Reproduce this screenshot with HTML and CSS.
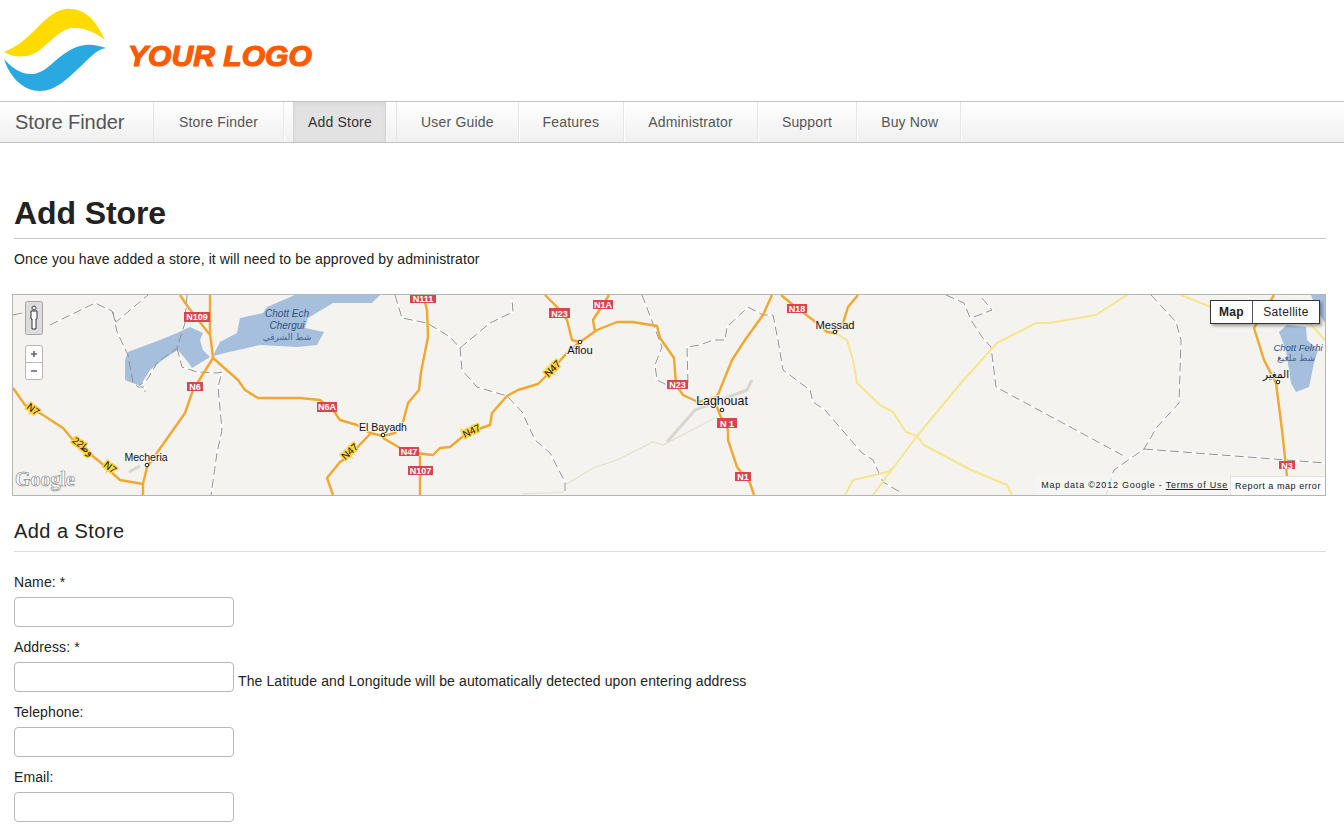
FILE: index.html
```html
<!DOCTYPE html>
<html lang="en">
<head>
<meta charset="utf-8">
<title>Add Store</title>
<link rel="stylesheet" href="styles.css">
</head>
<body>
<header class="site-head">
  <svg class="logo-mark" viewBox="0 0 110 101" width="110" height="101" aria-hidden="true">
    <path class="logo-y" d="M4 52C14 48 24 41 33 32C43 22 53 11 65 9C84 7 96 20 105 40C98 34 85 27 72 28C60 29 49 44 37 52C27 58 14 58 4 52Z"/>
    <path class="logo-b" d="M4 59C12 68 22 75 33 74C46 73 56 58 67 52C80 43 93 43 106 48C95 50 88 60 80 67C68 78 56 91 40 91C24 91 10 78 4 59Z"/>
  </svg>
  <span class="logo-text">YOUR LOGO</span>
</header>

<nav class="navbar">
  <a class="brand">Store Finder</a>
  <ul class="nav">
    <li class="nav-item nav-first">Store Finder</li>
    <li class="nav-item nav-active">Add Store</li>
    <li class="nav-item nav-after">User Guide</li>
    <li class="nav-item">Features</li>
    <li class="nav-item">Administrator</li>
    <li class="nav-item">Support</li>
    <li class="nav-item nav-last">Buy Now</li>
  </ul>
</nav>

<main class="content">
  <h1 class="page-title">Add Store</h1>
  <p class="lead">Once you have added a store, it will need to be approved by administrator</p>

  <div class="map">
    <svg class="map-canvas" viewBox="13 295 1312 200" width="1312" height="200" aria-hidden="true">
      <g class="urban">
        <path d="M752 380L747 390L695 410L667 442"/>
        <path d="M129 472L140 466"/>
      </g>
      <path class="minor" d="M717 417L663 445L653 442L617 460L593 468L565 485L565 492L522 494"/>

      <g class="border-w">
        <path d="M13 315L22 313M50 325L95 303L112 311L116 322L148 295M113 312L117 332L128 355L133 383L138 387L145 387L145 392M187 295L185 323L177 348L157 363L147 380L140 385M177 348L182 367L197 372L217 373L222 372L218 387L222 430L217 453L211 495M395 295L402 318L427 323L450 337L460 348L462 370L477 387L507 396L522 412L535 440L550 453L565 482L565 493M460 348L490 323L513 312L512 298M642 295L662 347L655 365L657 380L667 385M688 383L687 347L700 345L713 340L725 340L727 327L748 307L763 315L773 315L778 340L783 370L810 390L813 402L825 410L862 453L873 460L883 482L900 492M946 295L964 303L971 320L982 337L991 347L996 387L1124 456M982 298L992 310L974 317M1151 295L1176 322L1181 340L1179 403L1157 427L1144 449L1114 470L1106 495M1144 449L1325 463"/>
      </g>
      <g class="water">
        <path d="M295 295L267 307L263 313L240 318L237 333L220 342L216 350L213 356L225 353L260 345L297 347L317 345L324 332L305 328L308 318L333 303L372 303L380 295Z"/>
        <path d="M125 360L128 352L160 340L177 333L190 327L203 333L200 340L203 350L210 357L192 368L188 362L178 350L165 358L150 370L140 386L125 380Z"/>
        <path d="M1279 332L1287 325L1306 327L1307 340L1318 350L1314 363L1309 387L1296 392L1291 383L1286 350Z"/>
        <path d="M1311 295L1325 295L1325 323L1317 310Z"/>
        <path d="M222 342L235 340L230 346Z"/>
      </g>
      <g class="border-d">
        <path d="M13 315L22 313M50 325L95 303L112 311L116 322L148 295M113 312L117 332L128 355L133 383L138 387L145 387L145 392M187 295L185 323L177 348L157 363L147 380L140 385M177 348L182 367L197 372L217 373L222 372L218 387L222 430L217 453L211 495M395 295L402 318L427 323L450 337L460 348L462 370L477 387L507 396L522 412L535 440L550 453L565 482L565 493M460 348L490 323L513 312L512 298M642 295L662 347L655 365L657 380L667 385M688 383L687 347L700 345L713 340L725 340L727 327L748 307L763 315L773 315L778 340L783 370L810 390L813 402L825 410L862 453L873 460L883 482L900 492M946 295L964 303L971 320L982 337L991 347L996 387L1124 456M982 298L992 310L974 317M1151 295L1176 322L1181 340L1179 403L1157 427L1144 449L1114 470L1106 495M1144 449L1325 463"/>
      </g>

      <g class="road-y">
        <path d="M835 333L847 340L853 360L857 383L880 405L893 412L906 432L917 436L924 445L971 470L1007 485L1012 495"/>
        <path d="M873 495L917 436L961 383L997 343L1036 323L1049 323L1096 315L1127 295"/>
        <path d="M845 495L853 480L887 472L893 468"/>
        <path d="M1181 295L1211 307M1307 320L1325 340"/>
      </g>

      <g class="road-o">
        <path d="M13 388L25 405L43 415L63 428L73 440L100 462L120 480L143 484"/>
        <path d="M143 495L143 484L147 467L185 413L193 390L213 358L210 333L210 295"/>
        <path d="M180 295L188 307L210 335"/>
        <path d="M213 358L238 380L245 390L258 398L300 398L320 400L333 410L340 420L357 425L370 433L383 436L395 433L403 422L408 403L419 390L421 372L428 337L427 310L423 295"/>
        <path d="M370 434L350 455L340 462L327 478L333 495"/>
        <path d="M383 438L407 452L433 455L440 448L450 447L467 433L490 425L492 413L507 396L518 390L538 384L550 372L565 355L580 342L597 330L617 322L633 322L657 326L660 338L674 358L676 385L683 395L698 402L717 397L732 360L745 340L763 315L772 295"/>
        <path d="M717 400L717 407L720 415L728 430L728 440L737 467L750 483L754 495"/>
        <path d="M545 295L557 307L567 320L572 340L580 342"/>
        <path d="M609 295L593 320L595 332"/>
        <path d="M781 295L797 308L817 323L827 332L835 333"/>
        <path d="M858 295L848 307L843 323L835 333"/>
        <path d="M1274 295L1254 328L1264 360L1276 383L1282 430L1289 495"/>
        <path d="M420 456L420 495"/>
      </g>

      <g class="shield">
        <rect x="184" y="312" width="26" height="10"/><rect x="187" y="382" width="16" height="9"/>
        <rect x="317" y="402" width="20" height="10"/><rect x="399" y="447" width="20" height="9"/>
        <rect x="408" y="466" width="25" height="9"/><rect x="410" y="295" width="26" height="8"/>
        <rect x="549" y="308" width="21" height="10"/><rect x="593" y="300" width="20" height="9"/>
        <rect x="667" y="380" width="21" height="9"/><rect x="717" y="418" width="20" height="10"/>
        <rect x="735" y="472" width="16" height="9"/><rect x="787" y="304" width="20" height="9"/>
        <rect x="1279" y="461" width="16" height="8"/>
      </g>
      <g class="shield-t">
        <text x="197" y="320">N109</text><text x="195" y="390">N6</text>
        <text x="327" y="410">N6A</text><text x="409" y="455">N47</text>
        <text x="420.5" y="474">N107</text><text x="423" y="302">N111</text>
        <text x="559.5" y="317">N23</text><text x="603" y="308">N1A</text>
        <text x="677.5" y="388">N23</text><text x="727" y="427">N 1</text>
        <text x="743" y="480">N1</text><text x="797" y="312">N18</text>
        <text x="1287" y="468.5">N3</text>
      </g>

      <g class="hw">
        <text transform="translate(31 412) rotate(38)">N7</text>
        <text transform="translate(81 449) rotate(38)">22ﻭﻃ</text>
        <text transform="translate(108 470) rotate(38)">N7</text>
        <text transform="translate(352 454) rotate(-42)">N47</text>
        <text transform="translate(473 434) rotate(-25)">N47</text>
        <text transform="translate(555 371) rotate(-45)">N47</text>
      </g>

      <g class="city">
        <text class="c-s" x="146" y="461">Mecheria</text>
        <text class="c-m" x="383" y="431">El Bayadh</text>
        <text class="c-a" x="580" y="354">Aflou</text>
        <text class="c-l" x="722" y="405">Laghouat</text>
        <text class="c-a" x="835" y="329">Messad</text>
        <text class="c-m" x="1276" y="378">المغير</text>
      </g>
      <g class="dots">
        <circle cx="147" cy="465" r="1.8"/><circle cx="383" cy="435" r="1.8"/>
        <circle cx="580" cy="342" r="1.8"/><circle cx="722" cy="410" r="1.8"/>
        <circle cx="835" cy="332" r="1.8"/><circle cx="1278" cy="382" r="1.8"/>
      </g>
      <g class="lake">
        <text x="287" y="317">Chott Ech</text>
        <text x="287" y="329">Chergui</text>
        <text class="lake-ar" x="287" y="340">شط الشرقي</text>
        <text class="lake-r" x="1298" y="351">Chott Felrhi</text>
        <text class="lake-ar" x="1296" y="361">شط ملغيغ</text>
      </g>
      <text class="google" x="15" y="486">Google</text>

      <g class="ctl">
        <rect class="ctl-peg" x="25.5" y="301.5" width="17" height="33" rx="2"/>
        <path class="peg" d="M34 306a2 2 0 1 1-.01 0M31 311h6v8h-1v10h-4v-10h-1Z"/>
        <rect class="ctl-zoom" x="25.5" y="345.5" width="17" height="34" rx="2"/>
        <path class="ctl-line" d="M26 362.5h16"/>
        <path class="ctl-sign" d="M31 354h6M34 351v6M31 371h6"/>
      </g>
    </svg>

    <div class="map-type">
      <span class="mt-btn mt-on">Map</span>
      <span class="mt-btn">Satellite</span>
    </div>
    <div class="attr">
      <span class="attr-data">Map data ©2012 Google - <u>Terms of Use</u></span>
      <span class="attr-report">Report a map error</span>
    </div>
  </div>

  <h2 class="section-title">Add a Store</h2>

  <form class="store-form">
    <div class="field">
      <label class="field-label">Name: *</label>
      <input class="field-input" type="text">
    </div>
    <div class="field">
      <label class="field-label">Address: *</label>
      <div class="field-row">
        <input class="field-input" type="text">
        <span class="field-hint">The Latitude and Longitude will be automatically detected upon entering address</span>
      </div>
    </div>
    <div class="field">
      <label class="field-label">Telephone:</label>
      <input class="field-input" type="text">
    </div>
    <div class="field">
      <label class="field-label">Email:</label>
      <input class="field-input" type="text">
    </div>
  </form>
</main>
</body>
</html>
```
FILE: styles.css
```css
* { box-sizing: border-box; }
html, body { margin: 0; padding: 0; background: #fff; }
body { font-family: "Liberation Sans", Arial, sans-serif; font-size: 14px; line-height: 20px; color: #222; letter-spacing: .11px; overflow: hidden; height: 832px; }

.site-head { height: 101px; display: flex; align-items: flex-start; }
.logo-mark { display: block; flex: none; }
.logo-y { fill: #ffdb00; }
.logo-b { fill: #2aa8e0; }
.logo-text { margin: 38px 0 0 18px; font-size: 30px; line-height: 36px; font-weight: 700; font-style: italic; color: #ff5a00; letter-spacing: .05px; -webkit-text-stroke: 1.2px #ff5a00; white-space: nowrap; }

.navbar { height: 42px; display: flex; border-top: 1px solid #c4c4c4; border-bottom: 1px solid #c4c4c4; background: linear-gradient(#ffffff, #f0f0f0); letter-spacing: .17px; }
.brand { width: 154px; padding-left: 15px; border-right: 1px solid #e6e6e6; font-size: 20px; line-height: 40px; color: #555; flex: none; letter-spacing: -.05px; }
.nav { display: flex; list-style: none; margin: 0; padding: 0; }
.nav-item { padding: 0 24px; line-height: 40px; color: #555; border-right: 1px solid #e6e6e6; box-shadow: 1px 0 0 #fff; white-space: nowrap; }
.nav-first { padding: 0 25px; margin-right: 9px; }
.nav-active { padding: 0 15px; width: 93px; color: #333; background: #e2e2e2; border-right: 0; box-shadow: inset 0 2px 4px #d4d4d4, inset 1px 0 1px #d6d6d6, inset -1px 0 1px #d6d6d6; }
.nav-after { margin-left: 10px; border-left: 1px solid #e6e6e6; }
.nav-last { padding-right: 22px; }

.content { padding: 51px 18px 0 14px; }
.page-title { margin: 0; padding-bottom: 6px; border-bottom: 1px solid #c8c8c8; font-size: 32px; line-height: 38px; font-weight: 700; color: #222; letter-spacing: -.1px; }
.lead { margin: 10px 0 0; }

.map { position: relative; margin: 25px 0 0 -2px; height: 202px; border: 1px solid #b4b4b4; background: #f4f3f0; overflow: hidden; letter-spacing: 0; }
.map-canvas { display: block; }

.water path { fill: #a5bfdd; }
.urban path { fill: none; stroke: #d8d6cf; stroke-width: 3; }
.minor { fill: none; stroke: #e6dfcb; stroke-width: 1.2; }
.border-w path { fill: none; stroke: #fff; stroke-width: 2.2; }
.border-d path { fill: none; stroke: #8f8f8f; stroke-width: 1; stroke-dasharray: 9 4; }
.road-y path { fill: none; stroke: #f6e58e; stroke-width: 2; stroke-linejoin: round; }
.road-o path { fill: none; stroke: #f2a72e; stroke-width: 2.4; stroke-linejoin: round; }

.shield rect { fill: #d8454f; }
.shield-t text { font: 700 9px "Liberation Sans", sans-serif; fill: #fff; text-anchor: middle; }
.hw text { font: 10px "Liberation Sans", "DejaVu Sans", sans-serif; fill: #111; text-anchor: middle; stroke: #ffd23e; stroke-width: 3px; paint-order: stroke; }
.city text { font-family: "Liberation Sans", "DejaVu Sans", sans-serif; fill: #111; text-anchor: middle; stroke: #f4f3f0; stroke-width: 2px; paint-order: stroke; }
.c-s { font-size: 10.5px; }
.c-m { font-size: 10.5px; }
.c-a { font-size: 11.2px; }
.c-l { font-size: 12.4px; }
.dots circle { fill: #fff; stroke: #111; stroke-width: 1; }
.lake text { font: italic 10px "Liberation Sans", "DejaVu Sans", sans-serif; fill: #34517f; text-anchor: middle; }
.lake .lake-r { font-size: 9.5px; }
.lake .lake-ar { font-style: normal; font-size: 9px; fill: #48658f; }
.google { font: 700 20px "Liberation Serif", serif; fill: #fff; stroke: #8d8d8d; stroke-width: .7px; }
.ctl-peg { fill: #dcdcdc; stroke: #a5a5a5; }
.peg { fill: #fff; stroke: #333; stroke-width: 1; }
.ctl-zoom { fill: #fff; stroke: #b5b5b5; }
.ctl-line { stroke: #bbb; fill: none; }
.ctl-sign { stroke: #666; stroke-width: 1.6; fill: none; }

.map-type { position: absolute; top: 5px; right: 5px; width: 110px; height: 24px; display: flex; background: #fff; border: 1px solid #333; box-shadow: 2px 2px 3px rgba(0,0,0,.35); font-size: 12px; line-height: 22px; color: #222; }
.mt-btn { flex: 1 1 auto; text-align: center; letter-spacing: .3px; }
.mt-on { flex: 0 0 42px; font-weight: 700; border-right: 1px solid #555; }

.attr { position: absolute; right: 0; bottom: 0; display: flex; height: 19px; font-size: 9px; line-height: 19px; color: #222; letter-spacing: .77px; white-space: nowrap; }
.attr-data { padding: 0 2px 0 6px; background: rgba(245,245,245,.7); }
.attr-report { width: 95px; padding-left: 4px; background: #fbfbfb; border: 1px solid #e2e2e2; border-width: 1px 0 0 1px; color: #111; letter-spacing: .55px; }

.section-title { margin: 23px 0 0; padding-bottom: 8px; border-bottom: 1px solid #dcdcdc; font-size: 20px; line-height: 24px; font-weight: 400; color: #222; letter-spacing: .45px; }

.store-form { margin-top: 20px; }
.field { height: 65px; }
.field-label { display: block; height: 25px; line-height: 20px; color: #222; }
.field-row { display: flex; align-items: flex-end; }
.field-input { display: block; width: 220px; height: 30px; margin: 0; padding: 4px; background: #fff; border: 1px solid #b8b8b8; border-radius: 4px; flex: none; }
.field-hint { margin: 0 0 1px 4px; line-height: 20px; }
```
